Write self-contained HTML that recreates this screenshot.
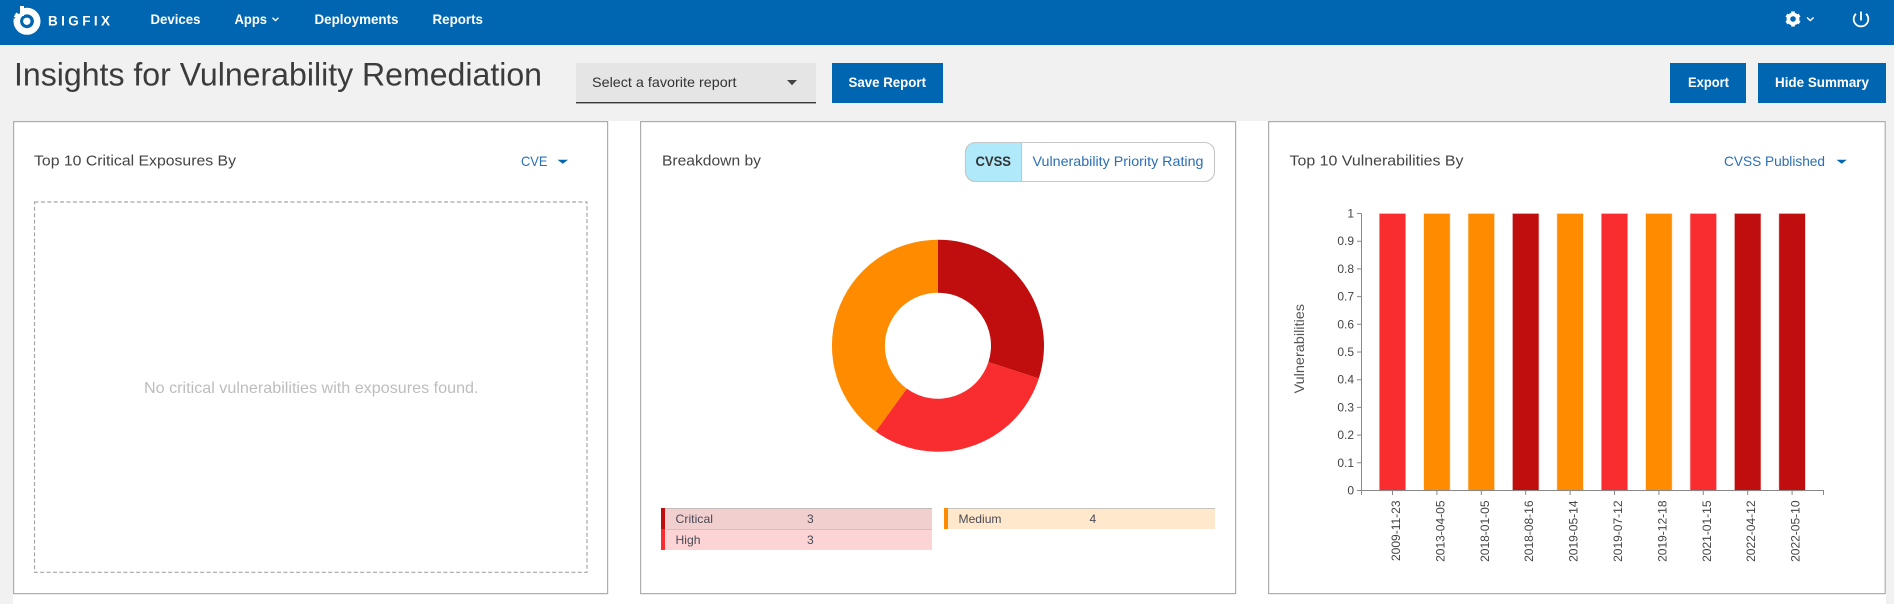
<!DOCTYPE html>
<html lang="en">
<head>
<meta charset="utf-8">
<title>Insights for Vulnerability Remediation</title>
<style>
html,body{margin:0;padding:0;width:1894px;height:604px;overflow:hidden;background:#f1f1f1}
svg{display:block}
text{font-family:"Liberation Sans",Arial,sans-serif}
.nav{fill:#fff;font-size:14px;font-weight:700}
.btn{fill:#fff;font-size:14px;font-weight:700}
.ttl{fill:#444;font-size:15px}
.lnk{fill:#2a6fb5;font-size:14px}
.lg{fill:#4a4a55;font-size:12px}
.yl{fill:#444;font-size:12px;text-anchor:end}
.xl{fill:#444;font-size:12px;text-anchor:end}
</style>
</head>
<body>
<svg width="1894" height="604" viewBox="0 0 1894 604" xmlns="http://www.w3.org/2000/svg">
<rect width="1894" height="604" fill="#f1f1f1"/>
<!-- header -->
<rect width="1894" height="45" fill="#0066b1"/>
<g>
  <circle cx="27" cy="21.3" r="10.2" fill="none" stroke="#fff" stroke-width="6.6"/>
  <path d="M13 8 L21 6 L20 13 L14 19 Z" fill="#0066b1"/>
  <path d="M13.8 17 A13.5 13.5 0 0 1 16.5 12.5 L20 15 L18 18 Z" fill="#fff"/>
  <rect x="20" y="6" width="4" height="10" fill="#fff"/>
  <circle cx="26.8" cy="21.3" r="3.7" fill="#fff"/>
</g>
<text x="48" y="25.5" fill="#fff" font-size="13.5" font-weight="700" textLength="62" lengthAdjust="spacing">BIGFIX</text>
<text class="nav" x="150.5" y="24" textLength="50" lengthAdjust="spacingAndGlyphs">Devices</text>
<text class="nav" x="234.5" y="24" textLength="32.5" lengthAdjust="spacingAndGlyphs">Apps</text>
<path d="M272.5 17.7 L275.5 20.5 L278.5 17.7" fill="none" stroke="#fff" stroke-width="1.4"/>
<text class="nav" x="314.5" y="24" textLength="84" lengthAdjust="spacingAndGlyphs">Deployments</text>
<text class="nav" x="432.5" y="24" textLength="50.5" lengthAdjust="spacingAndGlyphs">Reports</text>
<!-- gear -->
<g transform="translate(1793 19)" fill="#fff">
  <circle r="4.6" fill="none" stroke="#fff" stroke-width="3.6"/>
  <rect x="-1.8" y="-7.6" width="3.6" height="3"/>
  <rect x="-1.8" y="-7.6" width="3.6" height="3" transform="rotate(60)"/>
  <rect x="-1.8" y="-7.6" width="3.6" height="3" transform="rotate(120)"/>
  <rect x="-1.8" y="-7.6" width="3.6" height="3" transform="rotate(180)"/>
  <rect x="-1.8" y="-7.6" width="3.6" height="3" transform="rotate(240)"/>
  <rect x="-1.8" y="-7.6" width="3.6" height="3" transform="rotate(300)"/>
</g>
<path d="M1807 17.5 L1810.3 20.5 L1813.6 17.5" fill="none" stroke="#fff" stroke-width="1.4"/>
<!-- power -->
<path d="M1856 13.8 A7.3 7.3 0 1 0 1866 13.8" fill="none" stroke="#fff" stroke-width="1.8"/>
<path d="M1861 11.5 V20.5" fill="none" stroke="#fff" stroke-width="1.8"/>

<!-- toolbar -->
<text x="14" y="85.5" fill="#3b3b3b" font-size="32" textLength="528" lengthAdjust="spacingAndGlyphs">Insights for Vulnerability Remediation</text>
<rect x="576" y="63" width="240" height="40" fill="#e5e5e5"/>
<rect x="576" y="102" width="240" height="1.4" fill="#3a3a3a"/>
<text x="592" y="87" fill="#333" font-size="14" textLength="144.5" lengthAdjust="spacingAndGlyphs">Select a favorite report</text>
<path d="M787 80 H797 L792 85.2 Z" fill="#444"/>
<rect x="832" y="63" width="111" height="40" fill="#0066b1"/>
<text class="btn" x="848.5" y="87" textLength="77.5" lengthAdjust="spacingAndGlyphs">Save Report</text>
<rect x="1670" y="63" width="76" height="40" fill="#0066b1"/>
<text class="btn" x="1688" y="87" textLength="41" lengthAdjust="spacingAndGlyphs">Export</text>
<rect x="1758" y="63" width="128" height="40" fill="#0066b1"/>
<text class="btn" x="1775" y="87" textLength="94" lengthAdjust="spacingAndGlyphs">Hide Summary</text>

<!-- content area -->
<rect x="13" y="121" width="1873" height="483" fill="#fff"/>
<rect x="13.6" y="121.6" width="594" height="472" fill="#fff" stroke="#adadad" stroke-width="1.2"/>
<rect x="640.6" y="121.6" width="595" height="472" fill="#fff" stroke="#adadad" stroke-width="1.2"/>
<rect x="1268.6" y="121.6" width="616.6" height="472" fill="#fff" stroke="#adadad" stroke-width="1.2"/>

<!-- card 1 -->
<text class="ttl" x="34" y="165.5" textLength="202" lengthAdjust="spacingAndGlyphs">Top 10 Critical Exposures By</text>
<text class="lnk" x="521" y="166" textLength="26.5" lengthAdjust="spacingAndGlyphs">CVE</text>
<path d="M557.5 159.8 H568 L562.8 163.8 Z" fill="#0066b1"/>
<rect x="34.5" y="202" width="552.5" height="370.3" fill="none" stroke="#a6a6a6" stroke-width="1.2" stroke-dasharray="4 2.4"/>
<text x="144" y="393" fill="#bdbdbd" font-size="16" textLength="334.5" lengthAdjust="spacingAndGlyphs">No critical vulnerabilities with exposures found.</text>

<!-- card 2 -->
<text class="ttl" x="662" y="165.5" textLength="99" lengthAdjust="spacingAndGlyphs">Breakdown by</text>
<rect x="965.5" y="142.5" width="249" height="39" rx="10" fill="#fff" stroke="#c6c6c6" stroke-width="1.1"/>
<path d="M1021.6 142.5 H975.5 A10 10 0 0 0 965.5 152.5 V171.5 A10 10 0 0 0 975.5 181.5 H1021.6 Z" fill="#b0e9fa" stroke="#c6c6c6" stroke-width="1.1"/>
<text x="975.5" y="166" fill="#333" font-size="14" font-weight="700" textLength="35.5" lengthAdjust="spacingAndGlyphs">CVSS</text>
<text class="lnk" x="1032.5" y="166" textLength="171" lengthAdjust="spacingAndGlyphs">Vulnerability Priority Rating</text>

<!-- donut: centre 938,345.7 R106 r53 -->
<path d="M938 239.7 A106 106 0 0 1 1038.8 378.5 L988.4 362.1 A53 53 0 0 0 938 292.7 Z" fill="#c00d0d"/>
<path d="M1038.8 378.5 A106 106 0 0 1 875.7 431.5 L906.8 388.6 A53 53 0 0 0 988.4 362.1 Z" fill="#f92c2f"/>
<path d="M875.7 431.5 A106 106 0 0 1 938 239.7 L938 292.7 A53 53 0 0 0 906.8 388.6 Z" fill="#ff8c00"/>

<!-- legend -->
<rect x="661" y="508.5" width="271" height="20.5" fill="#f2cfcf"/>
<rect x="661" y="508" width="271" height="1" fill="#c4bcbc"/>
<rect x="661" y="508" width="4" height="21" fill="#c00d0d"/>
<text class="lg" x="675.5" y="523" textLength="37.5" lengthAdjust="spacingAndGlyphs">Critical</text>
<text class="lg" x="807" y="523">3</text>
<rect x="661" y="529.5" width="271" height="20.5" fill="#fcd4d5"/>
<rect x="661" y="529" width="271" height="1" fill="#cfc2c2"/>
<rect x="661" y="529" width="4" height="21" fill="#f92c2f"/>
<text class="lg" x="675.5" y="544" textLength="25" lengthAdjust="spacingAndGlyphs">High</text>
<text class="lg" x="807" y="544">3</text>
<rect x="944" y="508.5" width="271" height="20.5" fill="#ffe8cc"/>
<rect x="944" y="508" width="271" height="1" fill="#c9c4bb"/>
<rect x="944" y="508" width="4" height="21" fill="#ff8c00"/>
<text class="lg" x="958.5" y="523" textLength="43" lengthAdjust="spacingAndGlyphs">Medium</text>
<text class="lg" x="1089.5" y="523">4</text>

<!-- card 3 -->
<text class="ttl" x="1289.5" y="165.5" textLength="174" lengthAdjust="spacingAndGlyphs">Top 10 Vulnerabilities By</text>
<text class="lnk" x="1724" y="166" textLength="101" lengthAdjust="spacingAndGlyphs">CVSS Published</text>
<path d="M1836.5 159.8 H1846.8 L1841.7 163.8 Z" fill="#0066b1"/>

<!-- bar chart -->
<g stroke-opacity=".28" stroke-width="1.2">
  <rect x="1379.6" y="213.8" width="25.8" height="276.8" fill="#f92c2f" stroke="#f92c2f"/>
  <rect x="1424" y="213.8" width="25.8" height="276.8" fill="#ff8c00" stroke="#ff8c00"/>
  <rect x="1468.4" y="213.8" width="25.8" height="276.8" fill="#ff8c00" stroke="#ff8c00"/>
  <rect x="1512.8" y="213.8" width="25.8" height="276.8" fill="#c00d0d" stroke="#c00d0d"/>
  <rect x="1557.2" y="213.8" width="25.8" height="276.8" fill="#ff8c00" stroke="#ff8c00"/>
  <rect x="1601.6" y="213.8" width="25.8" height="276.8" fill="#f92c2f" stroke="#f92c2f"/>
  <rect x="1646" y="213.8" width="25.8" height="276.8" fill="#ff8c00" stroke="#ff8c00"/>
  <rect x="1690.4" y="213.8" width="25.8" height="276.8" fill="#f92c2f" stroke="#f92c2f"/>
  <rect x="1734.8" y="213.8" width="25.8" height="276.8" fill="#c00d0d" stroke="#c00d0d"/>
  <rect x="1779.2" y="213.8" width="25.8" height="276.8" fill="#c00d0d" stroke="#c00d0d"/>
</g>
<g stroke="#888" stroke-width="1" fill="none">
  <path d="M1361.5 213.5 V490.5 H1823.5 V495"/>
  <path d="M1357 213.5H1361.5M1357 241.2H1361.5M1357 268.9H1361.5M1357 296.6H1361.5M1357 324.3H1361.5M1357 352H1361.5M1357 379.7H1361.5M1357 407.4H1361.5M1357 435.1H1361.5M1357 462.8H1361.5M1357 490.5H1361.5"/>
  <path d="M1361.5 490.5V495M1392.5 490.5V495M1436.9 490.5V495M1481.3 490.5V495M1525.7 490.5V495M1570.1 490.5V495M1614.5 490.5V495M1658.9 490.5V495M1703.3 490.5V495M1747.7 490.5V495M1792.1 490.5V495"/>
</g>
<text class="yl" x="1354" y="217.5">1</text>
<text class="yl" x="1354" y="245.2">0.9</text>
<text class="yl" x="1354" y="272.9">0.8</text>
<text class="yl" x="1354" y="300.6">0.7</text>
<text class="yl" x="1354" y="328.3">0.6</text>
<text class="yl" x="1354" y="356">0.5</text>
<text class="yl" x="1354" y="383.7">0.4</text>
<text class="yl" x="1354" y="411.4">0.3</text>
<text class="yl" x="1354" y="439.1">0.2</text>
<text class="yl" x="1354" y="466.8">0.1</text>
<text class="yl" x="1354" y="494.5">0</text>
<text transform="translate(1304 393.5) rotate(-90)" fill="#555" font-size="14" textLength="89.5" lengthAdjust="spacingAndGlyphs">Vulnerabilities</text>
<text class="xl" transform="translate(1400 500.5) rotate(-90)">2009-11-23</text>
<text class="xl" transform="translate(1444.4 500.5) rotate(-90)">2013-04-05</text>
<text class="xl" transform="translate(1488.8 500.5) rotate(-90)">2018-01-05</text>
<text class="xl" transform="translate(1533.2 500.5) rotate(-90)">2018-08-16</text>
<text class="xl" transform="translate(1577.6 500.5) rotate(-90)">2019-05-14</text>
<text class="xl" transform="translate(1622 500.5) rotate(-90)">2019-07-12</text>
<text class="xl" transform="translate(1666.4 500.5) rotate(-90)">2019-12-18</text>
<text class="xl" transform="translate(1710.8 500.5) rotate(-90)">2021-01-15</text>
<text class="xl" transform="translate(1755.2 500.5) rotate(-90)">2022-04-12</text>
<text class="xl" transform="translate(1799.6 500.5) rotate(-90)">2022-05-10</text>
</svg>
</body>
</html>
